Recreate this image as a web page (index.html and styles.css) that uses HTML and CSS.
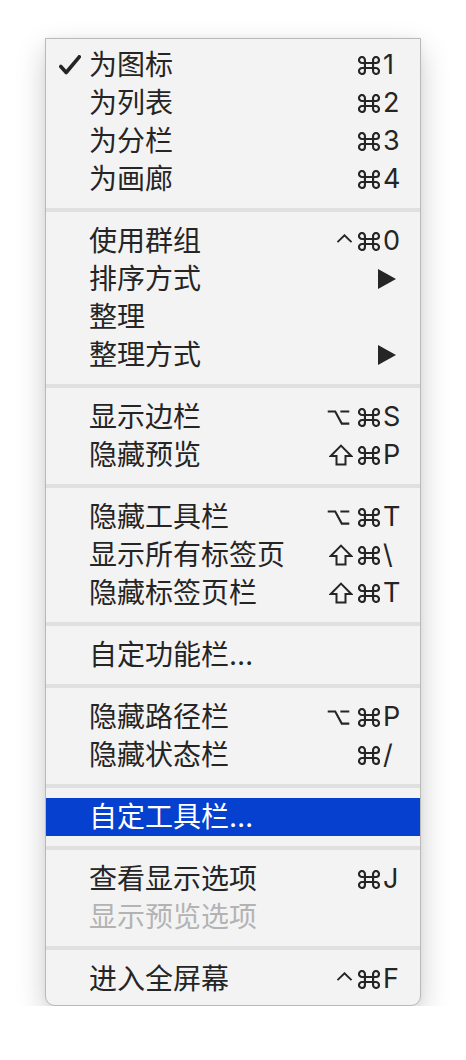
FILE: index.html
```html
<!DOCTYPE html>
<html lang="zh-CN">
<head>
<meta charset="utf-8">
<link rel="stylesheet" href="styles.css">
</head>
<body>
<svg class="defs" width="0" height="0" aria-hidden="true">
  <defs>
    <symbol id="cmd" viewBox="0 0 21.6 18.6">
      <path d="M6.8 6.8 H14.8 V11.8 H6.8 Z M6.8 6.8 V3.9 A2.9 2.9 0 1 0 3.9 6.8 H6.8 M14.8 6.8 V3.9 A2.9 2.9 0 1 1 17.7 6.8 H14.8 M6.8 11.8 V14.7 A2.9 2.9 0 1 1 3.9 11.8 H6.8 M14.8 11.8 V14.7 A2.9 2.9 0 1 0 17.7 11.8 H14.8" fill="none" stroke="currentColor" stroke-width="2.1"/>
    </symbol>
    <symbol id="opt" viewBox="0 0 24 16">
      <path d="M0.5 1.5 H8.5 L15.5 14.5 H23.5 M14 1.5 H23.5" fill="none" stroke="currentColor" stroke-width="2.2"/>
    </symbol>
    <symbol id="shift" viewBox="0 0 24 22">
      <path d="M12 1.6 L22.3 12 H16.5 V20.6 H7.5 V12 H1.7 Z" fill="none" stroke="currentColor" stroke-width="2" stroke-linejoin="miter"/>
    </symbol>
    <symbol id="ctrl" viewBox="0 0 18 10">
      <path d="M1.2 9 L9 1.4 L16.8 9" fill="none" stroke="currentColor" stroke-width="2.1"/>
    </symbol>
    <symbol id="tri" viewBox="0 0 18 20">
      <path d="M0 0 L18 10 L0 20 Z" fill="currentColor"/>
    </symbol>
  </defs>
</svg>
<div class="menu">
  <div class="item">
    <span class="check"><svg width="22" height="20" viewBox="0 0 22 20"><path d="M1.8 11.5 L7.2 17.5 L20.3 1.8" fill="none" stroke="currentColor" stroke-width="3.6" stroke-linecap="round" stroke-linejoin="round"/></svg></span>
    <span class="label">为图标</span><span class="mods"><svg class="i-cmd"><use href="#cmd"/></svg></span><span class="key">1</span>
  </div>
  <div class="item"><span class="check"></span><span class="label">为列表</span><span class="mods"><svg class="i-cmd"><use href="#cmd"/></svg></span><span class="key">2</span></div>
  <div class="item"><span class="check"></span><span class="label">为分栏</span><span class="mods"><svg class="i-cmd"><use href="#cmd"/></svg></span><span class="key">3</span></div>
  <div class="item"><span class="check"></span><span class="label">为画廊</span><span class="mods"><svg class="i-cmd"><use href="#cmd"/></svg></span><span class="key">4</span></div>
  <div class="sep"></div>
  <div class="item"><span class="check"></span><span class="label">使用群组</span><span class="mods"><svg class="i-ctrl"><use href="#ctrl"/></svg><svg class="i-cmd"><use href="#cmd"/></svg></span><span class="key">0</span></div>
  <div class="item"><span class="check"></span><span class="label">排序方式</span><span class="arrow"><svg class="i-tri"><use href="#tri"/></svg></span></div>
  <div class="item"><span class="check"></span><span class="label">整理</span></div>
  <div class="item"><span class="check"></span><span class="label">整理方式</span><span class="arrow"><svg class="i-tri"><use href="#tri"/></svg></span></div>
  <div class="sep"></div>
  <div class="item"><span class="check"></span><span class="label">显示边栏</span><span class="mods"><svg class="i-opt"><use href="#opt"/></svg><svg class="i-cmd"><use href="#cmd"/></svg></span><span class="key">S</span></div>
  <div class="item"><span class="check"></span><span class="label">隐藏预览</span><span class="mods"><svg class="i-shift"><use href="#shift"/></svg><svg class="i-cmd"><use href="#cmd"/></svg></span><span class="key">P</span></div>
  <div class="sep"></div>
  <div class="item"><span class="check"></span><span class="label">隐藏工具栏</span><span class="mods"><svg class="i-opt"><use href="#opt"/></svg><svg class="i-cmd"><use href="#cmd"/></svg></span><span class="key">T</span></div>
  <div class="item"><span class="check"></span><span class="label">显示所有标签页</span><span class="mods"><svg class="i-shift"><use href="#shift"/></svg><svg class="i-cmd"><use href="#cmd"/></svg></span><span class="key">\</span></div>
  <div class="item"><span class="check"></span><span class="label">隐藏标签页栏</span><span class="mods"><svg class="i-shift"><use href="#shift"/></svg><svg class="i-cmd"><use href="#cmd"/></svg></span><span class="key">T</span></div>
  <div class="sep"></div>
  <div class="item"><span class="check"></span><span class="label">自定功能栏…</span></div>
  <div class="sep"></div>
  <div class="item"><span class="check"></span><span class="label">隐藏路径栏</span><span class="mods"><svg class="i-opt"><use href="#opt"/></svg><svg class="i-cmd"><use href="#cmd"/></svg></span><span class="key">P</span></div>
  <div class="item"><span class="check"></span><span class="label">隐藏状态栏</span><span class="mods"><svg class="i-cmd"><use href="#cmd"/></svg></span><span class="key">/</span></div>
  <div class="sep"></div>
  <div class="item selected"><span class="check"></span><span class="label">自定工具栏…</span></div>
  <div class="sep"></div>
  <div class="item"><span class="check"></span><span class="label">查看显示选项</span><span class="mods"><svg class="i-cmd"><use href="#cmd"/></svg></span><span class="key">J</span></div>
  <div class="item disabled"><span class="check"></span><span class="label">显示预览选项</span></div>
  <div class="sep"></div>
  <div class="item"><span class="check"></span><span class="label">进入全屏幕</span><span class="mods"><svg class="i-ctrl"><use href="#ctrl"/></svg><svg class="i-cmd"><use href="#cmd"/></svg></span><span class="key">F</span></div>
</div>
</body>
</html>
```
FILE: styles.css
```css
html, body {
  margin: 0;
  background: #ffffff;
}
body {
  padding: 38px 0 0 45px;
  font-family: "Inter", "Noto Sans CJK SC", sans-serif;
  color: #252525;
}
.defs {
  position: absolute;
  width: 0;
  height: 0;
  overflow: hidden;
}
.menu {
  width: 374px;
  background: #f3f3f3;
  border: 1px solid #b9b9b9;
  border-radius: 0 0 10px 10px;
  padding: 7px 0;
  box-shadow: 0 12px 30px rgba(0, 0, 0, 0.2), 0 0 6px rgba(0, 0, 0, 0.05);
}
.item {
  display: flex;
  align-items: center;
  height: 38px;
  padding-right: 19px;
  font-size: 28px;
  line-height: 38px;
}
.check {
  width: 43px;
  flex: none;
  display: flex;
  justify-content: flex-end;
  padding-right: 8px;
  box-sizing: border-box;
}
.check svg { display: block; }
.label {
  flex: 1;
  white-space: nowrap;
}
.mods {
  display: flex;
  align-items: center;
  gap: 5px;
  margin-right: 3px;
  height: 38px;
}
.mods svg { display: block; }
.i-cmd { width: 22px; height: 19px; }
.i-opt { width: 23px; height: 15px; margin-right: 3px; }
.i-shift { width: 24px; height: 22px; }
.i-ctrl { width: 17px; height: 9px; align-self: flex-start; margin-top: 12px; }
.key {
  width: 18px;
  flex: none;
  font-size: 27px;
}
.arrow {
  width: 18px;
  flex: none;
  display: flex;
  margin-right: 5px;
}
.i-tri { display: block; width: 18px; height: 20px; }
.sep {
  height: 4px;
  margin: 10px 0;
  background: #e0e0e0;
}
.selected {
  background: #0540cf;
  color: #ffffff;
}
.disabled {
  color: #b3b3b3;
}
```
